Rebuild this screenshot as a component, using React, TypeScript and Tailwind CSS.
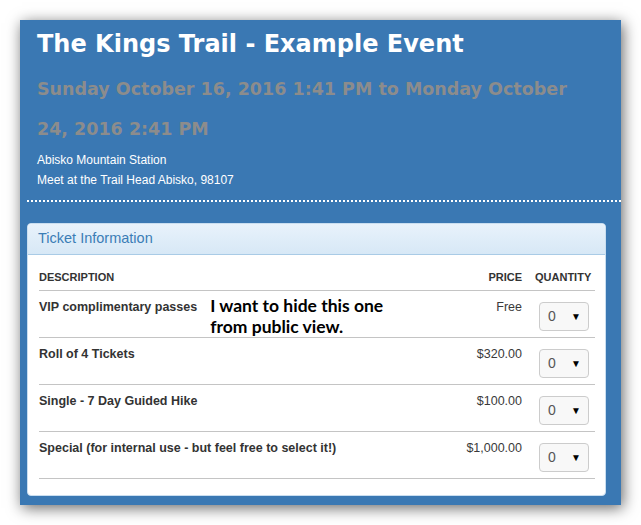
const tickets = [
  { name: "VIP complimentary passes", price: "Free", note: true },
  { name: "Roll of 4 Tickets", price: "$320.00" },
  { name: "Single - 7 Day Guided Hike", price: "$100.00" },
  { name: "Special (for internal use - but feel free to select it!)", price: "$1,000.00" },
];

const QtySelect = () => (
  <div className="flex h-[29px] w-[50px] items-center justify-between rounded-[4px] border border-[#cccccc] bg-[#f8f8f8] pl-[8px] pr-[7px]">
    <span className="text-[14px] text-[#555]">0</span>
    <span className="text-[10px] text-black">▼</span>
  </div>
);

export default function App() {
  return (
    <div className="min-h-[525px] bg-white p-[20px] font-['Liberation_Sans',sans-serif]">
      <div className="h-[485px] w-[601px] bg-[#3a78b3] pl-[7px] shadow-[2px_3px_14px_rgba(0,0,0,0.6)]">
        {/* event header */}
        <div className="border-b-2 border-dotted border-white pb-[10px] pl-[10px] pr-[40px] pt-[7px]">
          <h1 className="font-['DejaVu_Sans',sans-serif] text-[24px] font-bold leading-[34px] text-white">
            The Kings Trail - Example Event
          </h1>
          <h3 className="mt-[8px] font-['DejaVu_Sans',sans-serif] text-[17.5px] font-bold leading-[40px] text-[#8c8c8c]">
            Sunday October 16, 2016 1:41 PM to Monday October 24, 2016 2:41 PM
          </h3>
          <div className="mt-[1px] text-[12px] leading-[20px] text-white">
            <p>Abisko Mountain Station</p>
            <p>Meet at the Trail Head Abisko, 98107</p>
          </div>
        </div>

        {/* ticket panel */}
        <div className="mr-[15px] mt-[21px] rounded-[4px] border border-[#c9def0] bg-white pb-[16px]">
          <div className="flex h-[31px] items-center rounded-t-[4px] border-b border-[#a9cbe6] bg-gradient-to-b from-[#e8f2fb] to-[#d7e8f6] pl-[10px] text-[14.5px] text-[#3b7db6]">
            Ticket Information
          </div>
          <div className="pl-[11px] pr-[10px]">
            <div className="flex h-[36px] items-end border-b border-[#c4c4c4] pb-[5px] text-[11px] font-bold text-[#333]">
              <div className="flex-1">DESCRIPTION</div>
              <div className="text-right">PRICE</div>
              <div className="w-[73px] pl-[13px]">QUANTITY</div>
            </div>
            {tickets.map((t) => (
              <div key={t.name} className="flex h-[47px] border-b border-[#c4c4c4]">
                <div className="flex flex-1 items-start pt-[8px]">
                  <span className="text-[12.5px] font-bold leading-[16px] text-[#333]">{t.name}</span>
                  {t.note && (
                    <span className="ml-[13px] mt-[-4px] font-['Lato',sans-serif] text-[17.5px] font-bold leading-[21px] text-black">
                      I want to hide this one
                      <br />
                      from public view.
                    </span>
                  )}
                </div>
                <div className="pt-[8px] text-right text-[12.5px] leading-[16px] text-[#3a3a3a]">{t.price}</div>
                <div className="w-[73px] pl-[17px] pt-[11px]">
                  <QtySelect />
                </div>
              </div>
            ))}
          </div>
        </div>
      </div>
    </div>
  );
}
